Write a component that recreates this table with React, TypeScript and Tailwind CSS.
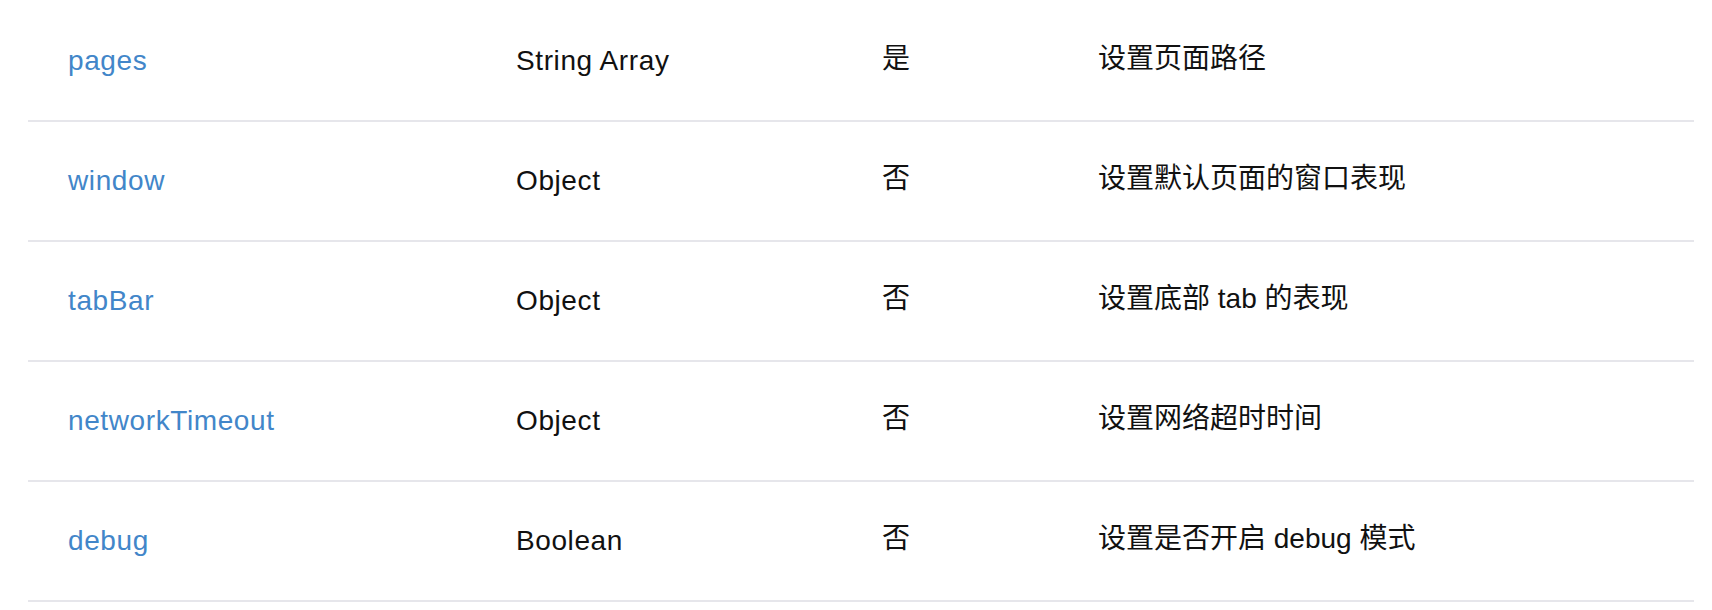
import React from 'react';

type Row = { name: string; type: string; required: string; desc: string };

const rows: Row[] = [
  { name: 'pages', type: 'String Array', required: '是', desc: '设置页面路径' },
  { name: 'window', type: 'Object', required: '否', desc: '设置默认页面的窗口表现' },
  { name: 'tabBar', type: 'Object', required: '否', desc: '设置底部 tab 的表现' },
  { name: 'networkTimeout', type: 'Object', required: '否', desc: '设置网络超时时间' },
  { name: 'debug', type: 'Boolean', required: '否', desc: '设置是否开启 debug 模式' },
];

const App: React.FC = () => {
  return (
    <div className="min-h-screen bg-white pt-[2px] font-['Liberation_Sans','Noto_Sans_CJK_SC',sans-serif] text-[28px] leading-none">
      <div className="ml-[28px] w-[1666px]">
        {rows.map((r) => (
          <div key={r.name} className="grid grid-cols-[448px_366px_216px_1fr] h-[120px] items-center border-b-2 border-[#e6e6eb]">
            <div className="pl-[40px] tracking-[0.6px] text-[#4286c9]">{r.name}</div>
            <div className="pl-[40px] tracking-[0.6px] text-[#111]">{r.type}</div>
            <div className="pl-[40px] pb-[4px] text-[#111]">{r.required}</div>
            <div className="pl-[40px] pb-[4px] text-[#111]">{r.desc}</div>
          </div>
        ))}
      </div>
    </div>
  );
};

export default App;
